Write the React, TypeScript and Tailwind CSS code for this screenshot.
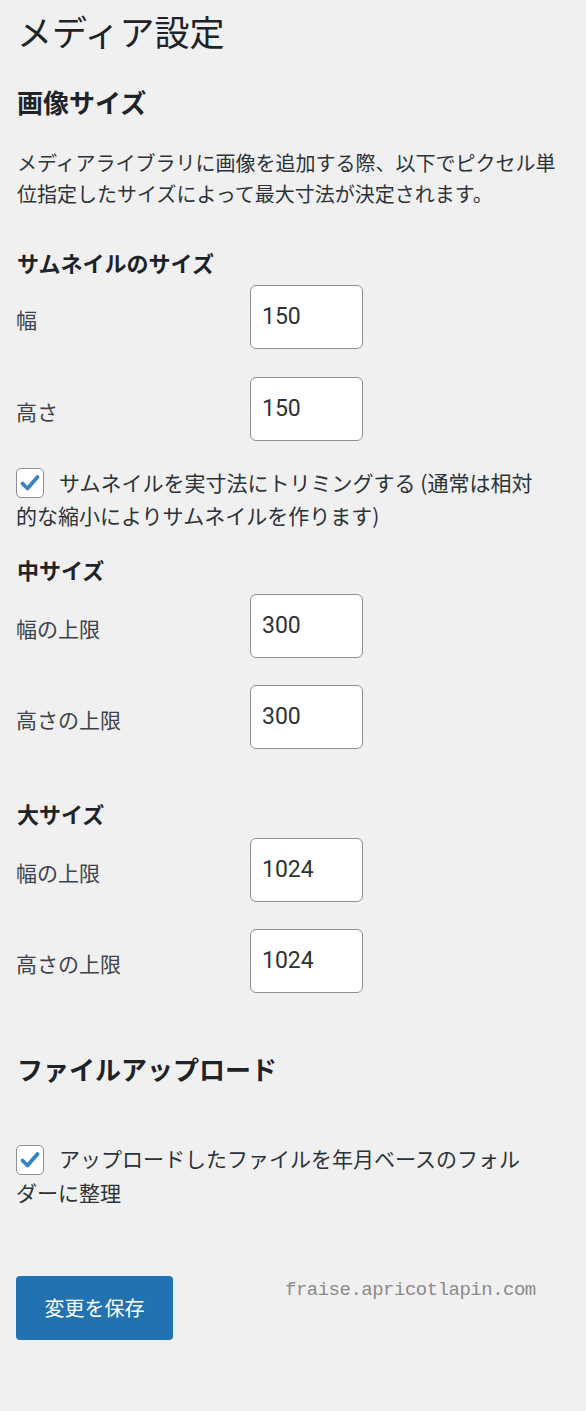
const font = "font-['Noto_Sans_CJK_JP','Noto_Sans',sans-serif]";

const SizeRow = ({ label, value, className = "" }: { label: string; value: string; className?: string }) => (
  <div className={`flex items-center ${className}`}>
    <div className="w-[234px] text-[21px] leading-[31px] text-[#3c434a] pt-[4px]">{label}</div>
    <div className="w-[113px] h-[64px] border border-[#8c8f94] rounded-[6px] bg-white flex items-center pl-[11px] text-[23px] text-[#2c3338] font-['Roboto',sans-serif]">
      {value}
    </div>
  </div>
);

const Check = () => (
  <span className="inline-flex align-middle relative -top-[2px] w-[28px] h-[30px] mr-[15px] border border-[#8c8f94] rounded-[5px] bg-white items-center justify-center">
    <svg width="22" height="22" viewBox="0 0 22 22">
      <path d="M3.5 11.5 L8.5 16.5 L18.5 5" fill="none" stroke="#3582c4" strokeWidth="3.8" strokeLinecap="round" strokeLinejoin="round" />
    </svg>
  </span>
);

export default function App() {
  return (
    <div className={`min-h-[1411px] bg-[#f0f0f1] px-4 pt-[11px] text-[#1d2327] ${font}`}>
      <h1 className="text-[35px] leading-[40px] font-normal pl-[1px]">メディア設定</h1>

      <h2 className="mt-[36px] text-[26px] leading-[30px] font-bold pl-[1px]">画像サイズ</h2>
      <p className="mt-[30px] text-[20px] leading-[31px] text-[#2c3338] pl-[1px]">
        メディアライブラリに画像を追加する際、以下でピクセル単位指定したサイズによって最大寸法が決定されます。
      </p>

      <h3 className="mt-[39px] text-[22px] leading-[28px] font-bold pl-[1px]">サムネイルのサイズ</h3>
      <SizeRow label="幅" value="150" className="mt-[9px]" />
      <SizeRow label="高さ" value="150" className="mt-[28px]" />

      <p className="mt-[26px] max-w-[522px] text-[21px] leading-[31px] text-[#2c3338]">
        <Check />
        サムネイルを実寸法にトリミングする (通常は相対的な縮小によりサムネイルを作ります)
      </p>

      <h3 className="mt-[24px] text-[22px] leading-[28px] font-bold pl-[1px]">中サイズ</h3>
      <SizeRow label="幅の上限" value="300" className="mt-[11px]" />
      <SizeRow label="高さの上限" value="300" className="mt-[27px]" />

      <h3 className="mt-[50px] text-[22px] leading-[28px] font-bold pl-[1px]">大サイズ</h3>
      <SizeRow label="幅の上限" value="1024" className="mt-[11px]" />
      <SizeRow label="高さの上限" value="1024" className="mt-[27px]" />

      <h2 className="mt-[61px] text-[26px] leading-[30px] font-bold pl-[1px]">ファイルアップロード</h2>
      <p className="mt-[59px] max-w-[522px] text-[21px] leading-[31px] text-[#2c3338]">
        <Check />
        アップロードしたファイルを年月ベースのフォルダーに整理
      </p>

      <div className="mt-[68px] flex items-start">
        <button className="w-[157px] h-[64px] rounded-[4px] bg-[#2271b1] text-white text-[20px] pt-[1px]">
          変更を保存
        </button>
        <span className="ml-[112px] mt-[2px] text-[19px] leading-[24px] text-[#8a8a8a] font-['Liberation_Mono',monospace] tracking-[-0.5px]">
          fraise.apricotlapin.com
        </span>
      </div>
    </div>
  );
}
